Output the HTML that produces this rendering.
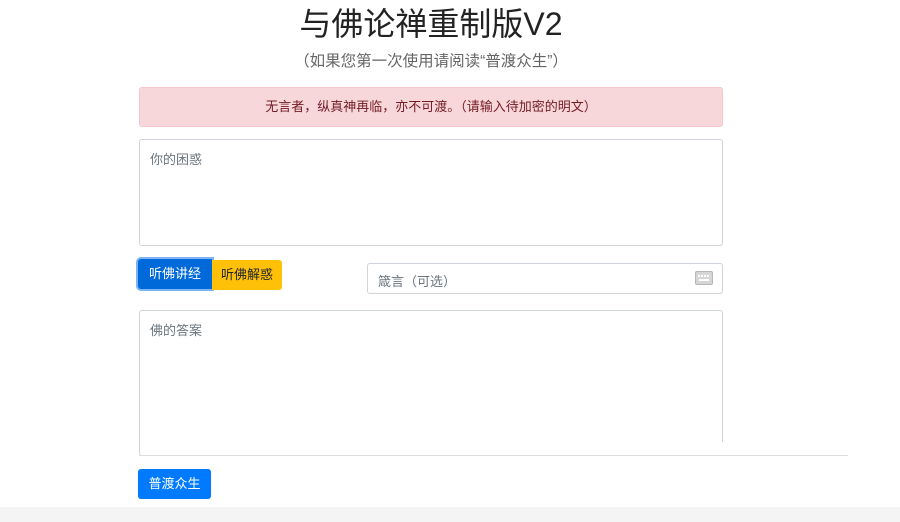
<!DOCTYPE html>
<html><head><meta charset="utf-8"><style>
body{margin:0;width:900px;height:522px;background:#fff;font-family:"Liberation Sans","Noto Sans CJK SC",sans-serif;position:relative;overflow:hidden;color:#212529}
.a{position:absolute}
h1{position:absolute;left:0;width:862px;top:4px;margin:0;text-align:center;font-size:32px;font-weight:400;line-height:40px;color:#222}
.sub{left:0;width:862px;top:51px;text-align:center;font-size:15.5px;color:#666;line-height:22px}
.alert{left:139px;top:87px;width:582px;height:38px;background:#f8d7da;border:1px solid #f5c6cb;border-radius:3px;color:#721c24;font-size:13px;line-height:38px;text-align:center}
.ta{border:1px solid #ced4da;border-radius:3px;box-sizing:border-box;font-size:13px;color:#6c757d;padding:9px 10px}
.btn{font-size:13px;line-height:30px;text-align:center;border-radius:3px}
</style></head><body>
<h1>与佛论禅重制版V2</h1>
<div class="a sub">（如果您第一次使用请阅读“普渡众生”）</div>
<div class="a alert">无言者，纵真神再临，亦不可渡。（请输入待加密的明文）</div>
<div class="a ta" style="left:139px;top:139px;width:584px;height:107px">你的困惑</div>
<div class="a btn" style="left:138px;top:259px;width:74px;height:30px;background:#0069d9;color:#fff;box-shadow:0 0 0 2px #7ab6f5;border-radius:3px 0 0 3px">听佛讲经</div>
<div class="a btn" style="left:212px;top:260px;width:70px;height:30px;background:#ffc107;color:#212529;border-radius:0 3px 3px 0">听佛解惑</div>
<div class="a ta" style="left:367px;top:263px;width:356px;height:31px;padding:7px 10px;color:#6c757d">箴言（可选）</div>
<svg class="a" style="left:695px;top:271px" width="18" height="14" viewBox="0 0 18 14"><rect x="0.5" y="0.5" width="17" height="13" rx="1.5" fill="#d6d6d6" stroke="#b8b8b8"/><g fill="#fff"><rect x="3" y="4" width="2" height="2"/><rect x="6" y="4" width="2" height="2"/><rect x="9" y="4" width="2" height="2"/><rect x="12" y="4" width="2" height="2"/><rect x="4" y="8" width="10" height="2"/></g></svg>
<div class="a ta" style="left:139px;top:310px;width:584px;height:146px;border-bottom:none">佛的答案</div>
<div class="a" style="left:139px;top:455px;width:709px;height:1px;background:#ddd"></div>
<div class="a" style="left:660px;top:442px;width:64px;height:13px;background:#fff"></div>
<div class="a btn" style="left:138px;top:469px;width:73px;height:30px;background:#007bff;color:#fff">普渡众生</div>
<div class="a" style="left:0;top:507px;width:900px;height:15px;background:#f4f4f4"></div>
</body></html>
